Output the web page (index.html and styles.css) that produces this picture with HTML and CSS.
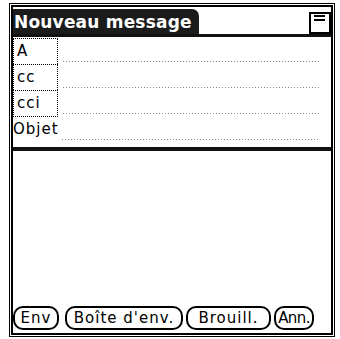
FILE: index.html
```html
<!DOCTYPE html>
<html lang="fr">
<head>
<meta charset="utf-8">
<title>Nouveau message</title>
<link rel="stylesheet" href="styles.css">
</head>
<body>
<div class="frame">
  <div class="screen">
    <div class="titlebar">
      <div class="tab">Nouveau message</div>
      <div class="menu-icon">
        <svg width="18" height="18" viewBox="0 0 18 18">
          <rect x="3" y="1" width="11" height="2" fill="#000"/>
          <rect x="3" y="5" width="11" height="2" fill="#000"/>
        </svg>
      </div>
    </div>
    <div class="fields">
      <div class="row">
        <div class="label boxed">A</div>
        <div class="dots"></div>
      </div>
      <div class="row">
        <div class="label boxed">cc</div>
        <div class="dots"></div>
      </div>
      <div class="row">
        <div class="label boxed last">cci</div>
        <div class="dots"></div>
      </div>
      <div class="row subject">
        <div class="label plain">Objet</div>
        <div class="dots"></div>
      </div>
    </div>
    <div class="separator"></div>
    <div class="body"></div>
    <div class="buttons">
      <div class="btn btn-env">Env</div>
      <div class="btn btn-boite">Boîte d'env.</div>
      <div class="btn btn-brouill">Brouill.</div>
      <div class="btn btn-ann">Ann.</div>
    </div>
  </div>
</div>
</body>
</html>
```

FILE: styles.css
```css
html, body {
  margin: 0;
  padding: 0;
  background: #fff;
}

body {
  font-family: "DejaVu Sans", sans-serif;
  color: #000;
}

.frame {
  margin: 3px 0 0 9px;
  width: 326px;
  height: 334px;
  box-sizing: border-box;
  border: 1px solid #000;
  padding: 1px;
}

.screen {
  height: 100%;
  box-sizing: border-box;
  border: 2px solid #000;
  display: flex;
  flex-direction: column;
}

.titlebar {
  height: 27px;
  border-bottom: 3px solid #111;
  display: flex;
  justify-content: space-between;
  align-items: flex-end;
}

.tab {
  background: #1b1b1b;
  color: #fff;
  font-weight: bold;
  font-size: 17px;
  letter-spacing: 0.2px;
  height: 25px;
  line-height: 26px;
  padding: 0 7px 0 1px;
  border-radius: 0 7px 0 0;
  white-space: nowrap;
}

.menu-icon {
  width: 22px;
  height: 22px;
  box-sizing: border-box;
  border: 2px solid #000;
  display: flex;
  justify-content: center;
}

.fields {
  padding-top: 1px;
}

.row {
  display: flex;
  align-items: flex-end;
  height: 26px;
}

.label {
  font-size: 15px;
  letter-spacing: 1px;
  box-sizing: border-box;
  height: 100%;
  line-height: 24px;
}

.label.boxed {
  width: 45px;
  border-top: 1px dotted #000;
  border-left: 1px dotted #000;
  border-right: 1px dotted #000;
  padding-left: 3px;
}

.label.boxed.last {
  border-bottom: 1px dotted #000;
  height: 27px;
  margin-bottom: -1px;
}

.label.plain {
  width: 48px;
  line-height: 26px;
}

.dots {
  flex: 1;
  height: 1px;
  margin: 0 12px 2px 5px;
  background: repeating-linear-gradient(to right, #8a8a8a 0 1px, transparent 1px 3px);
}

.subject .dots {
  margin-left: 1px;
}

.separator {
  margin-top: 5px;
  height: 4px;
  background: #111;
}

.body {
  flex: 1;
}

.buttons {
  display: flex;
  padding-bottom: 3px;
}

.btn {
  height: 24px;
  box-sizing: border-box;
  border: 2px solid #000;
  border-radius: 10px;
  font-size: 15px;
  letter-spacing: 1px;
  line-height: 20px;
  text-align: center;
  white-space: nowrap;
}

.btn-env {
  width: 46px;
}

.btn-boite {
  width: 118px;
  margin-left: 6px;
}

.btn-brouill {
  width: 85px;
  margin-left: 3px;
}

.btn-ann {
  width: 40px;
  margin-left: 3px;
  letter-spacing: -0.6px;
}
```
